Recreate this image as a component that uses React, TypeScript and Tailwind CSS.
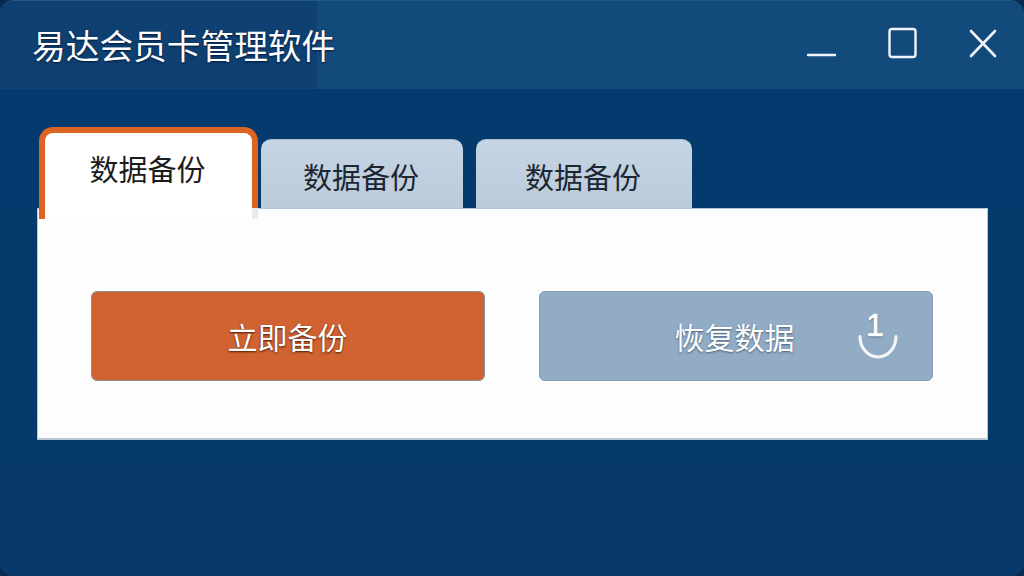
const font = "font-['Noto_Sans_CJK_SC','Noto_Sans',sans-serif]";

function Tab({ wide }: { wide?: boolean }) {
  return (
    <div
      className={`${wide ? "w-[216px] ml-[13px] pr-[2px]" : "w-[202px] ml-[3px] pr-[2px]"} h-[69px] pt-[12px] rounded-t-[10px] bg-gradient-to-b from-[#c6d5e3] to-[#bbcbda] border-t border-[#a9c0d6] text-center text-[29px] leading-[48px] text-[#1c2733]`}
    >
      数据备份
    </div>
  );
}

export default function App() {
  return (
    <div className={`w-[1024px] h-[576px] overflow-hidden bg-[#0a2a4f] ${font}`}>
      <div className="w-full h-full rounded-[14px] flex flex-col bg-gradient-to-b from-[#043a6e] to-[#07396b] border-t border-[#1f5a8e]">
        <header className="h-[88px] flex bg-[#134a7c] rounded-t-[14px] shrink-0">
          <div className="w-[317px] h-full rounded-tl-[14px] bg-[#0e4072] pl-[32px] pt-[19px] text-[33.7px] leading-[50px] text-white whitespace-nowrap [text-shadow:0_1px_2px_rgba(0,20,50,0.9)]">
            易达会员卡管理软件
          </div>
          <div className="flex-1 flex justify-end items-start">
            <svg width="240" height="70" viewBox="0 0 240 70" fill="none" stroke="#f1f5f9" strokeWidth="2.4" strokeLinecap="round" className="mr-[20px]">
              <path d="M44 54H71" />
              <rect x="125.5" y="28" width="26" height="28" rx="2.5" />
              <path d="M207 30L231 55M231 30L207 55" strokeWidth="2.6" />
            </svg>
          </div>
        </header>
        <main className="flex-1 pl-[37px] pr-[36px] flex flex-col">
          <div className="h-[119px] pl-[2px] flex items-end shrink-0 relative z-10">
            <div className="relative w-[219px] h-[92px] -mb-[11px] box-border border-x-[6px] border-t-[6px] border-[#dd6322] rounded-t-[14px] bg-white text-center text-[29px] leading-[64px] text-[#1b1b1b]">
              <div className="w-[205px] pt-[3px]">数据备份</div>
              <div className="absolute -right-[6px] bottom-0 w-[6px] h-[11px] bg-[#e6ebef]" />
            </div>
            <Tab />
            <Tab wide />
          </div>
          <section className="h-[232px] bg-[#fdfdfd] border border-[#b6c8d8] border-b-2 pt-[82px] pl-[53px] flex gap-[54px] items-start">
            <button className="w-[394px] h-[90px] rounded-[6px] bg-[#d16231] border border-[#8a8f98] text-[30px] text-white flex items-center justify-center pr-[1px] [text-shadow:0_1px_2px_rgba(60,20,0,0.9)]">
              立即备份
            </button>
            <button className="relative w-[394px] h-[90px] rounded-[6px] bg-[#92acc6] border border-[#8399ae] text-[30px] text-white flex items-center justify-center pr-[3px] [text-shadow:0_1px_2px_rgba(40,60,80,0.7)]">
              恢复数据
              <span className="absolute left-[318px] top-[19px] w-[40px] h-[48px]">
                <span className="absolute left-[8px] -top-[2px] text-[32px] leading-[32px] font-['Liberation_Sans',sans-serif] [-webkit-text-stroke:0.6px_white]">1</span>
                <svg width="40" height="48" viewBox="0 0 40 48" fill="none" stroke="#f5f8fb" strokeWidth="3" strokeLinecap="round" className="absolute left-0 top-0">
                  <path d="M2 25.5C2 37 10 46 20 46C30 46 38 37 38 25.5" />
                </svg>
              </span>
            </button>
          </section>
        </main>
      </div>
    </div>
  );
}
